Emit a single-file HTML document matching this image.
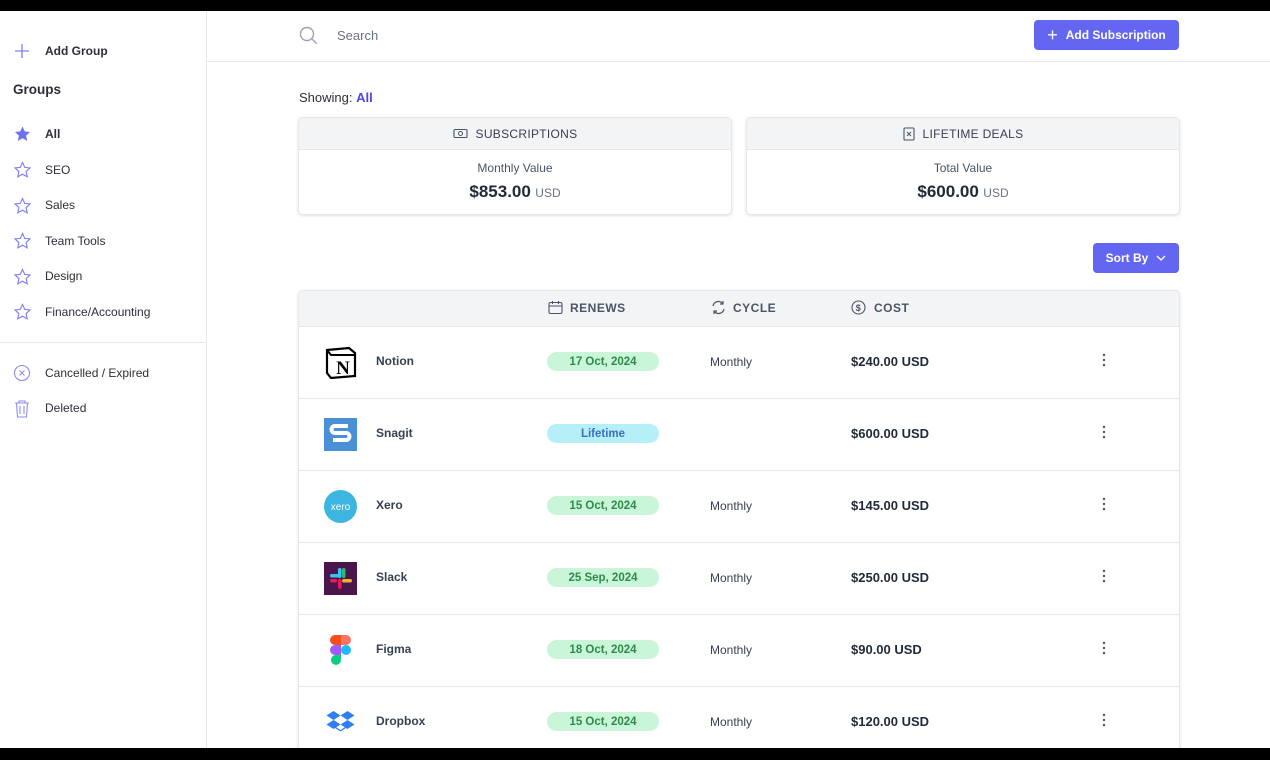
<!DOCTYPE html>
<html><head><style>
*{box-sizing:border-box;margin:0;padding:0}
body{width:1270px;height:760px;background:#000;font-family:"Liberation Sans",sans-serif;color:#2d2f3a;overflow:hidden;position:relative}
.app{position:absolute;top:11px;left:0;width:1270px;height:737px;background:#fff;overflow:hidden}
.side{position:absolute;left:0;top:0;width:207px;height:737px;border-right:1px solid #e5e7eb}
.abs{position:absolute}
.si{position:absolute;left:45px;font-size:12px;color:#2d2f3a}
.ic{position:absolute;left:13px}
.hdr{position:absolute;left:207px;top:0;right:0;height:51px;border-bottom:1px solid #e5e7eb}
.btn{position:absolute;background:#6366f1;color:#fff;font-size:12px;font-weight:bold;border-radius:4px;display:flex;align-items:center;justify-content:center;gap:8px}
.card{position:absolute;border:1px solid #e5e7eb;border-radius:5px;box-shadow:0 1px 3px rgba(0,0,0,.12);background:#fff;overflow:hidden}
.ch{height:32px;background:#f3f4f6;border-bottom:1px solid #e5e7eb;display:flex;align-items:center;justify-content:center;gap:8px;font-size:12px;color:#374151;letter-spacing:.3px}
.row{position:absolute;left:0;right:0;height:72px;border-top:1px solid #e5e7eb}
.row>*{position:absolute}
.nm{left:77px;top:27px;font-size:12px;font-weight:bold;color:#374151}
.pill{left:248px;top:25px;width:112px;height:19px;border-radius:10px;background:#c9f5d8;color:#2f8a4c;font-size:11.5px;font-weight:bold;display:flex;align-items:center;justify-content:center;padding-top:1px}
.cy{left:411px;top:28px;font-size:12px;color:#374151}
.co{left:552px;top:27px;font-size:13px;font-weight:bold;color:#1f2937}
.dots{left:803px;top:26px}
.logo{left:25px;top:19px;width:33px;height:33px}
</style></head><body>
<div class="app">
<div class="side">
 <svg class="ic" style="top:31px" width="18" height="18" viewBox="0 0 18 18"><path d="M9 2v14M2 9h14" stroke="#7c7ff2" stroke-width="1.3"/></svg>
 <div class="si" style="top:33px;font-weight:bold">Add Group</div>
 <div class="abs" style="left:13px;top:71px;font-size:13.5px;font-weight:bold">Groups</div>
 <svg class="ic" style="top:114px" width="19" height="18" viewBox="0 0 24 24"><path d="M12 2l3 6.5 7 .8-5.2 4.8 1.5 7L12 17.6 5.7 21.1l1.5-7L2 9.3l7-.8z" fill="#6f72ee"/></svg>
 <div class="si" style="top:116px;font-weight:bold">All</div>
 <svg class="ic" style="top:150px" width="19" height="18" viewBox="0 0 24 24"><path d="M12 2l3 6.5 7 .8-5.2 4.8 1.5 7L12 17.6 5.7 21.1l1.5-7L2 9.3l7-.8z" fill="none" stroke="#7c7ff2" stroke-width="1.5"/></svg>
 <div class="si" style="top:152px">SEO</div>
 <svg class="ic" style="top:186px" width="19" height="18" viewBox="0 0 24 24"><path d="M12 2l3 6.5 7 .8-5.2 4.8 1.5 7L12 17.6 5.7 21.1l1.5-7L2 9.3l7-.8z" fill="none" stroke="#7c7ff2" stroke-width="1.5"/></svg>
 <div class="si" style="top:187px">Sales</div>
 <svg class="ic" style="top:221px" width="19" height="18" viewBox="0 0 24 24"><path d="M12 2l3 6.5 7 .8-5.2 4.8 1.5 7L12 17.6 5.7 21.1l1.5-7L2 9.3l7-.8z" fill="none" stroke="#7c7ff2" stroke-width="1.5"/></svg>
 <div class="si" style="top:223px">Team Tools</div>
 <svg class="ic" style="top:257px" width="19" height="18" viewBox="0 0 24 24"><path d="M12 2l3 6.5 7 .8-5.2 4.8 1.5 7L12 17.6 5.7 21.1l1.5-7L2 9.3l7-.8z" fill="none" stroke="#7c7ff2" stroke-width="1.5"/></svg>
 <div class="si" style="top:258px">Design</div>
 <svg class="ic" style="top:292px" width="19" height="18" viewBox="0 0 24 24"><path d="M12 2l3 6.5 7 .8-5.2 4.8 1.5 7L12 17.6 5.7 21.1l1.5-7L2 9.3l7-.8z" fill="none" stroke="#7c7ff2" stroke-width="1.5"/></svg>
 <div class="si" style="top:294px">Finance/Accounting</div>
 <div class="abs" style="left:0;top:331px;width:206px;border-top:1px solid #e5e7eb"></div>
 <svg class="ic" style="top:353px" width="18" height="18" viewBox="0 0 18 18"><circle cx="9" cy="9" r="7.5" fill="none" stroke="#8b8ef2" stroke-width="1.1"/><path d="M6.5 6.5l5 5M11.5 6.5l-5 5" stroke="#8b8ef2" stroke-width="1.1"/></svg>
 <div class="si" style="top:355px">Cancelled / Expired</div>
 <svg class="ic" style="top:388px" width="18" height="19" viewBox="0 0 18 19"><path d="M2 4h14M6 4V2h6v2M3.5 4l1 14h9l1-14M7 7v8M11 7v8" fill="none" stroke="#8b8ef2" stroke-width="1.1"/></svg>
 <div class="si" style="top:390px">Deleted</div>
</div>
<div class="hdr">
 <svg class="abs" style="left:92px;top:15px" width="19" height="19" viewBox="0 0 19 19"><circle cx="8" cy="8" r="6.5" fill="none" stroke="#9ca3af" stroke-width="1.4"/><path d="M12.8 12.8l5 5" stroke="#9ca3af" stroke-width="1.4"/></svg>
 <div class="abs" style="left:130px;top:17px;font-size:13px;color:#6b7280">Search</div>
 <div class="btn" style="left:827px;top:9px;width:145px;height:30px;font-weight:bold"><span style="font-size:18px;font-weight:normal">+</span>Add Subscription</div>
</div>
<div class="abs" style="left:299px;top:79px;font-size:13px">Showing: <span style="color:#4f46e5;font-weight:bold">All</span></div>
<div class="card" style="left:298px;top:106px;width:434px;height:98px">
 <div class="ch"><svg width="15" height="12" viewBox="0 0 15 12"><rect x="1" y="1.5" width="13" height="8" rx="1" fill="none" stroke="#4b5563" stroke-width="1.1"/><circle cx="7.5" cy="5.5" r="2" fill="none" stroke="#4b5563"/></svg>SUBSCRIPTIONS</div>
 <div style="text-align:center;font-size:12px;color:#4b5563;margin-top:11px">Monthly Value</div>
 <div style="text-align:center;margin-top:7px"><b style="font-size:17px;color:#1f2937">$853.00</b> <span style="font-size:12px;color:#6b7280">USD</span></div>
</div>
<div class="card" style="left:746px;top:106px;width:434px;height:98px">
 <div class="ch"><svg width="12" height="14" viewBox="0 0 12 14"><rect x="1" y="1" width="10" height="12" rx="1" fill="none" stroke="#4b5563" stroke-width="1.1"/><path d="M4 5l4 4M8 5l-4 4" stroke="#4b5563"/></svg>LIFETIME DEALS</div>
 <div style="text-align:center;font-size:12px;color:#4b5563;margin-top:11px">Total Value</div>
 <div style="text-align:center;margin-top:7px"><b style="font-size:17px;color:#1f2937">$600.00</b> <span style="font-size:12px;color:#6b7280">USD</span></div>
</div>
<div class="btn" style="left:1093px;top:232px;width:86px;height:30px">Sort By <svg width="10" height="6" viewBox="0 0 10 6"><path d="M1 1l4 4 4-4" fill="none" stroke="#fff" stroke-width="1.3"/></svg></div>
<div class="card" style="left:298px;top:279px;width:882px;height:480px">
 <div style="height:35px;background:#f3f4f6;position:relative;font-size:12px;font-weight:bold;color:#4b5563;letter-spacing:.5px">
  <svg class="abs" style="left:249px;top:9px" width="15" height="15" viewBox="0 0 15 15"><rect x="1" y="2.5" width="13" height="11" rx="1.5" fill="none" stroke="#4b5563" stroke-width="1.1"/><path d="M1 6h13M4.5 1v3M10.5 1v3" stroke="#4b5563" stroke-width="1.1"/></svg>
  <span class="abs" style="left:271px;top:10px">RENEWS</span>
  <svg class="abs" style="left:412px;top:9px" width="15" height="15" viewBox="0 0 15 15"><path d="M2 6a5.5 5.5 0 0 1 10-2M13 9a5.5 5.5 0 0 1-10 2M12 1v3h-3M3 14v-3h3" fill="none" stroke="#4b5563" stroke-width="1.2"/></svg>
  <span class="abs" style="left:434px;top:10px">CYCLE</span>
  <svg class="abs" style="left:552px;top:9px" width="15" height="15" viewBox="0 0 15 15"><circle cx="7.5" cy="7.5" r="6.5" fill="none" stroke="#4b5563" stroke-width="1.1"/><text x="7.5" y="11" font-size="9" text-anchor="middle" fill="#4b5563" font-family="Liberation Sans">$</text></svg>
  <span class="abs" style="left:575px;top:10px">COST</span>
 </div>
 <div class="row" style="top:35px">
  <svg class="logo" viewBox="0 0 33 33"><path d="M3 4l22-2 6 5v23l-24 2-4-5z" fill="#fff" stroke="#000" stroke-width="2.2"/><path d="M3 4l4 5h24" fill="none" stroke="#000" stroke-width="2"/><text x="19" y="28" font-size="19" font-weight="bold" text-anchor="middle" font-family="Liberation Serif">N</text></svg>
  <div class="nm">Notion</div><div class="pill">17 Oct, 2024</div><div class="cy">Monthly</div><div class="co">$240.00 USD</div><svg class="dots" width="4" height="14" viewBox="0 0 4 14"><circle cx="2" cy="2" r="1.2" fill="#4b5563"/><circle cx="2" cy="7" r="1.2" fill="#4b5563"/><circle cx="2" cy="12" r="1.2" fill="#4b5563"/></svg>
 </div>
 <div class="row" style="top:107px">
  <svg class="logo" viewBox="0 0 33 33"><rect width="33" height="33" fill="#4a90d6"/><path d="M24 8H11a3 3 0 0 0 0 7h11a3 3 0 0 1 0 7H9" fill="none" stroke="#fff" stroke-width="4"/></svg>
  <div class="nm">Snagit</div><div class="pill" style="background:#b5f0f8;color:#3a6fbf">Lifetime</div><div class="co">$600.00 USD</div><svg class="dots" width="4" height="14" viewBox="0 0 4 14"><circle cx="2" cy="2" r="1.2" fill="#4b5563"/><circle cx="2" cy="7" r="1.2" fill="#4b5563"/><circle cx="2" cy="12" r="1.2" fill="#4b5563"/></svg>
 </div>
 <div class="row" style="top:179px">
  <svg class="logo" viewBox="0 0 33 33"><circle cx="16.5" cy="16.5" r="16.5" fill="#3cb5e0"/><text x="16.5" y="20" font-size="10" text-anchor="middle" fill="#fff" font-family="Liberation Sans">xero</text></svg>
  <div class="nm">Xero</div><div class="pill">15 Oct, 2024</div><div class="cy">Monthly</div><div class="co">$145.00 USD</div><svg class="dots" width="4" height="14" viewBox="0 0 4 14"><circle cx="2" cy="2" r="1.2" fill="#4b5563"/><circle cx="2" cy="7" r="1.2" fill="#4b5563"/><circle cx="2" cy="12" r="1.2" fill="#4b5563"/></svg>
 </div>
 <div class="row" style="top:251px">
  <svg class="logo" viewBox="0 0 33 33"><rect width="33" height="33" fill="#4a154b"/><rect x="14" y="6" width="3.5" height="10" rx="1.7" fill="#36c5f0"/><rect x="6" y="12" width="10" height="3.5" rx="1.7" fill="#36c5f0"/><rect x="18" y="6" width="3.5" height="10" rx="1.7" fill="#2eb67d"/><rect x="18" y="17" width="10" height="3.5" rx="1.7" fill="#ecb22e"/><rect x="14" y="17" width="3.5" height="10" rx="1.7" fill="#e01e5a"/><rect x="6" y="17" width="7" height="3.5" rx="1.7" fill="#e01e5a"/></svg>
  <div class="nm">Slack</div><div class="pill">25 Sep, 2024</div><div class="cy">Monthly</div><div class="co">$250.00 USD</div><svg class="dots" width="4" height="14" viewBox="0 0 4 14"><circle cx="2" cy="2" r="1.2" fill="#4b5563"/><circle cx="2" cy="7" r="1.2" fill="#4b5563"/><circle cx="2" cy="12" r="1.2" fill="#4b5563"/></svg>
 </div>
 <div class="row" style="top:323px">
  <svg class="logo" viewBox="0 0 33 33"><path d="M11 1h6v10h-6a5 5 0 0 1 0-10z" fill="#f24e1e"/><path d="M17 1h5a5 5 0 0 1 0 10h-5z" fill="#ff7262"/><path d="M11 11h6v10h-6a5 5 0 0 1 0-10z" fill="#a259ff"/><circle cx="22" cy="16" r="5" fill="#1abcfe"/><path d="M11 21h6v5a5 5 0 1 1-6-5z" fill="#0acf83"/></svg>
  <div class="nm">Figma</div><div class="pill">18 Oct, 2024</div><div class="cy">Monthly</div><div class="co">$90.00 USD</div><svg class="dots" width="4" height="14" viewBox="0 0 4 14"><circle cx="2" cy="2" r="1.2" fill="#4b5563"/><circle cx="2" cy="7" r="1.2" fill="#4b5563"/><circle cx="2" cy="12" r="1.2" fill="#4b5563"/></svg>
 </div>
 <div class="row" style="top:395px">
  <svg class="logo" viewBox="0 0 33 33"><g fill="#2f7ef5"><path d="M9.5 5l-7 4.5 7 4.5 7-4.5z"/><path d="M23.5 5l-7 4.5 7 4.5 7-4.5z"/><path d="M9.5 14l-7 4.5 7 4.5 7-4.5z"/><path d="M23.5 14l-7 4.5 7 4.5 7-4.5z"/><path d="M16.5 24l-7-4.5v1.5l7 4.5 7-4.5v-1.5z"/></g></svg>
  <div class="nm">Dropbox</div><div class="pill">15 Oct, 2024</div><div class="cy">Monthly</div><div class="co">$120.00 USD</div><svg class="dots" width="4" height="14" viewBox="0 0 4 14"><circle cx="2" cy="2" r="1.2" fill="#4b5563"/><circle cx="2" cy="7" r="1.2" fill="#4b5563"/><circle cx="2" cy="12" r="1.2" fill="#4b5563"/></svg>
 </div>
</div>
</div>
</body></html>
